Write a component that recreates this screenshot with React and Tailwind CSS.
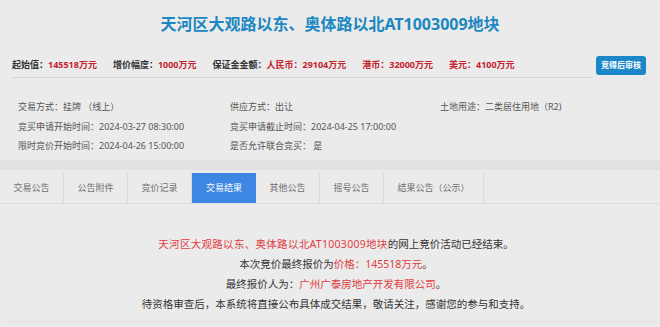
export default function App() {
  const tabs = ["交易公告", "公告附件", "竞价记录", "交易结果", "其他公告", "摇号公告"];
  const font = { fontFamily: '"Noto Sans", "Noto Sans CJK SC", sans-serif' };

  return (
    <div className="w-[660px] h-[327px] overflow-hidden bg-[#ebebeb]" style={font}>
      {/* header */}
      <div className="h-[48px] flex items-center justify-center">
        <h1 className="text-[16px] font-bold text-[#1d87c2]">天河区大观路以东、奥体路以北AT1003009地块</h1>
      </div>

      <div className="flex items-center mt-[5px] pl-[12px] pr-[14px] h-[24px]">
        <div className="flex-1 flex items-center gap-[16px] text-[9px] font-bold text-[#333]">
          <span>起始值：<span className="text-[#c4222b]">145518万元</span></span>
          <span>增价幅度：<span className="text-[#c4222b]">1000万元</span></span>
          <span>保证金金额：<span className="text-[#c4222b]">人民币：29104万元</span></span>
          <span className="text-[#c4222b]">港币：32000万元</span>
          <span className="text-[#c4222b]">美元：4100万元</span>
        </div>
        <button className="h-[19px] px-[5px] rounded-[3px] bg-[#1b86c8] text-white text-[8px] font-bold">竞得后审核</button>
      </div>
      <div className="ml-[12px] w-[581px] h-px bg-[#d6d6d6]"></div>

      {/* info */}
      <div className="grid grid-cols-[212px_210px_1fr] gap-y-[5.5px] pl-[18px] pt-[22px] pb-[7px] text-[9px] text-[#555] leading-[14px]">
        <span>交易方式：挂牌 （线上）</span>
        <span>供应方式：出让</span>
        <span>土地用途：二类居住用地（R2)</span>
        <span>竞买申请开始时间：2024-03-27 08:30:00</span>
        <span>竞买申请截止时间：2024-04-25 17:00:00</span>
        <span></span>
        <span>限时竞价开始时间：2024-04-26 15:00:00</span>
        <span>是否允许联合竞买： 是</span>
        <span></span>
      </div>
      <div className="h-[10px] bg-[#e1e1e1]"></div>

      {/* tabs */}
      <div className="flex pt-[3px] border-b border-[#dedede]">
        {tabs.map((t, i) => (
          <div
            key={t}
            className={
              i === 3
                ? "w-[64px] h-[30px] flex items-center justify-center bg-[#3d87e3] text-white text-[9px]"
                : "w-[64px] h-[30px] flex items-center justify-center border-r border-[#dcdcdc] text-[#6e6e6e] text-[9px]"
            }
          >
            {t}
          </div>
        ))}
        <div className="w-[100px] h-[30px] flex items-center justify-center border-r border-[#dcdcdc] text-[#6e6e6e] text-[9px]">结果公告（公示）</div>
      </div>

      {/* content */}
      <div className="mx-[3px] mt-[2px] pl-[12px] h-[116px] border-b border-[#dedede] flex flex-col items-center pt-[28px] text-[10.5px] leading-[20px] text-[#333]">
        <p><span className="text-[#e13b41] tracking-[0.3px]">天河区大观路以东、奥体路以北AT1003009地块</span>的网上竞价活动已经结束。</p>
        <p>本次竞价最终报价为<span className="text-[#e13b41]">价格：145518万元</span>。</p>
        <p>最终报价人为：<span className="text-[#e13b41]">广州广泰房地产开发有限公司</span>。</p>
        <p>待资格审查后，本系统将直接公布具体成交结果，敬请关注，感谢您的参与和支持。</p>
      </div>
    </div>
  );
}
